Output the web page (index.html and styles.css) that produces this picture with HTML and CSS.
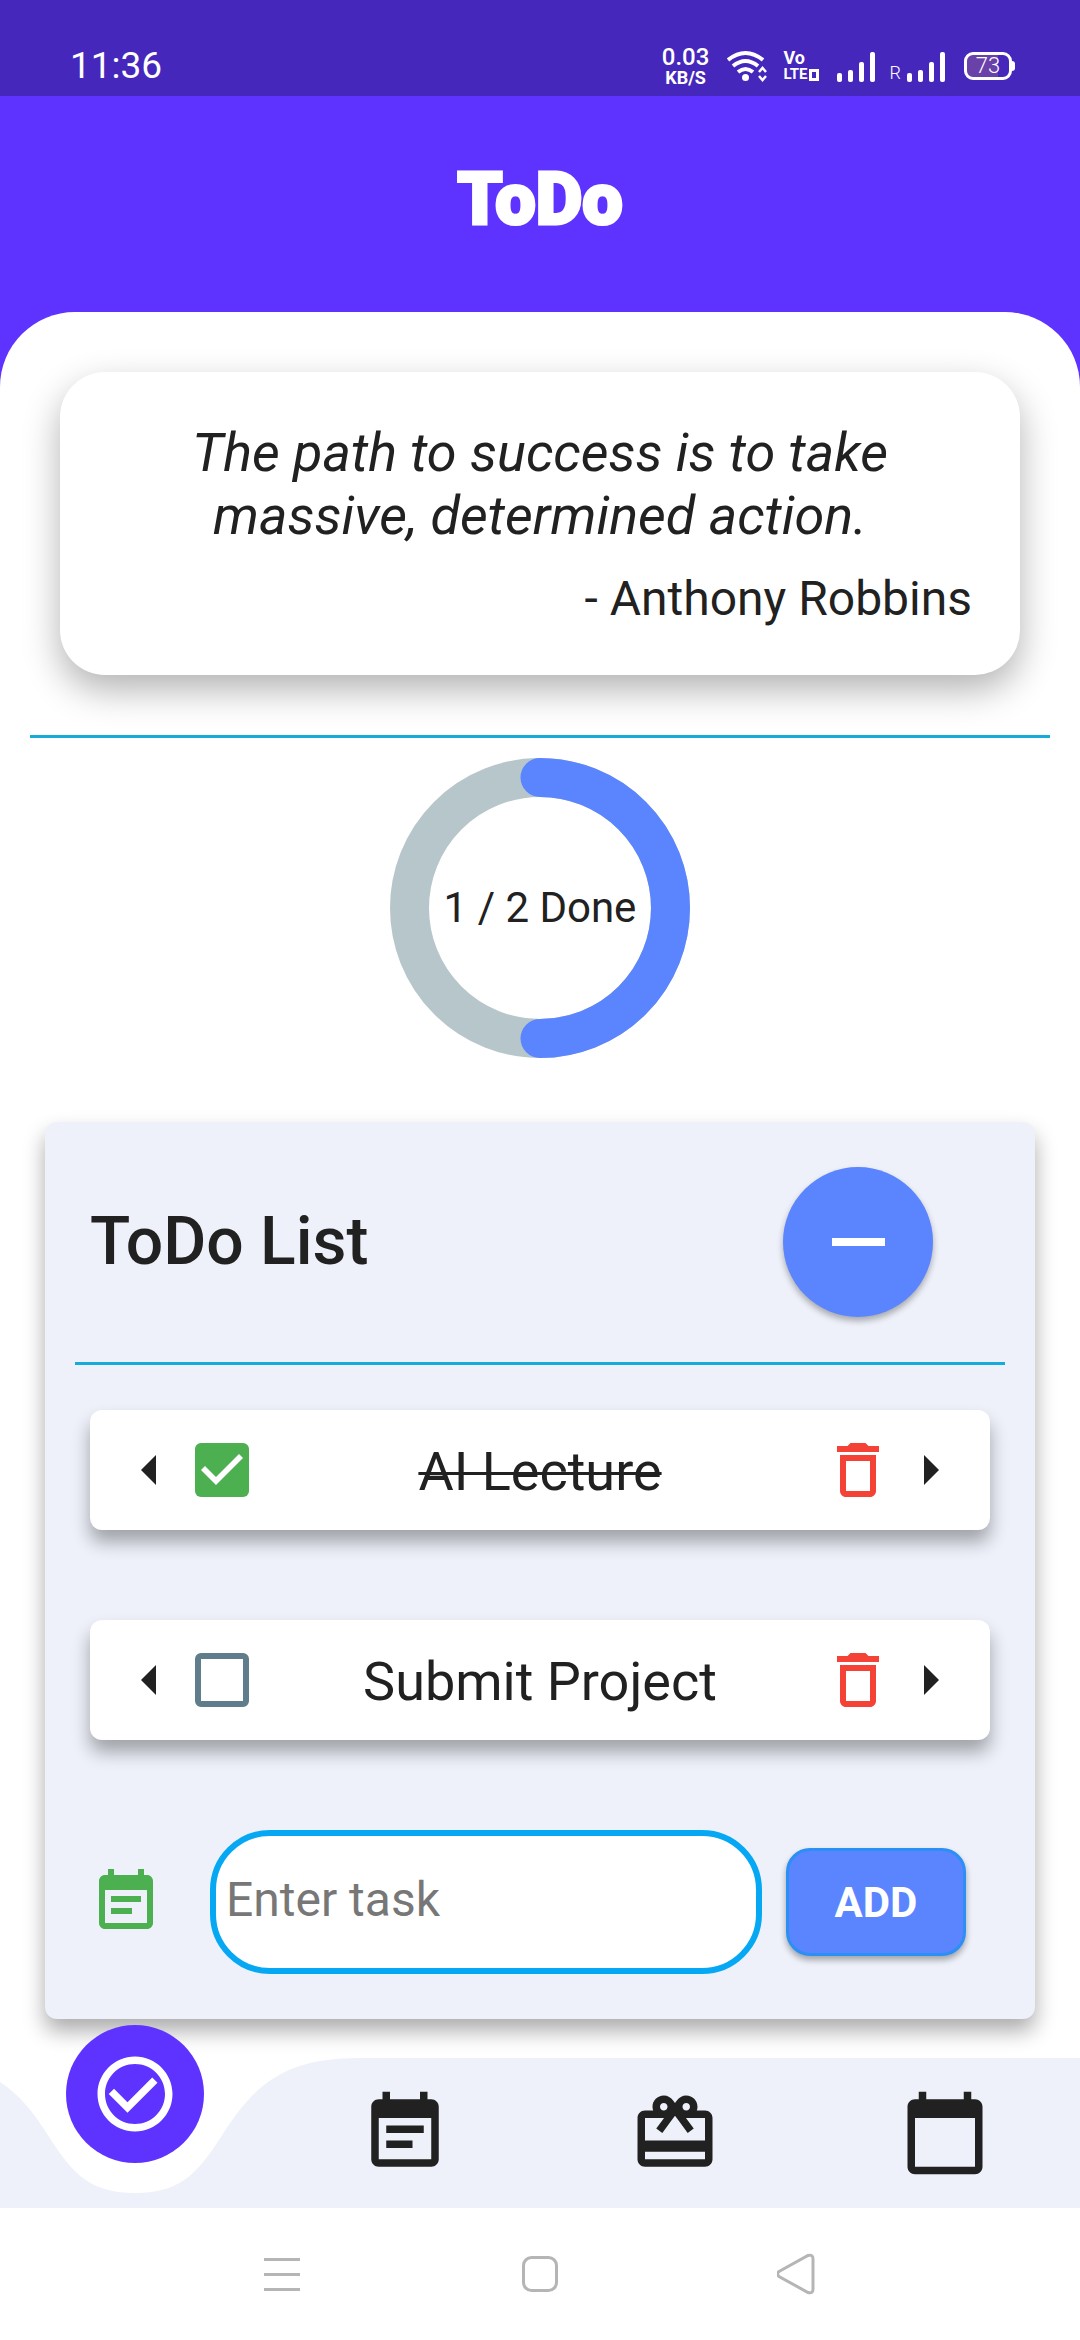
FILE: index.html
```html
<!DOCTYPE html>
<html lang="en">
<head>
<meta charset="utf-8">
<meta name="viewport" content="width=device-width, initial-scale=1">
<title>ToDo</title>
<link rel="stylesheet" href="styles.css">
</head>
<body>
<svg class="sprite" aria-hidden="true">
  <symbol id="i-left" viewBox="0 0 24 24"><path d="M14 7l-5 5 5 5V7z"/></symbol>
  <symbol id="i-right" viewBox="0 0 24 24"><path d="M10 17l5-5-5-5v10z"/></symbol>
  <symbol id="i-trash" viewBox="0 0 24 24"><path d="M6 19c0 1.1.9 2 2 2h8c1.1 0 2-.9 2-2V7H6v12zM8 9h8v10H8V9zm7.5-5l-1-1h-5l-1 1H5v2h14V4z"/></symbol>
  <symbol id="i-note" viewBox="0 0 24 24"><path d="M17 10H7v2h10v-2zM19 3h-1V1h-2v2H8V1H6v2H5c-1.110 0-2 .9-2 2v14c0 1.100.89 2 2 2h14c1.100 0 2-.9 2-2V5c0-1.100-.9-2-2-2zM19 19H5V8h14v11zM14 14H7v2h7v-2z"/></symbol>
  <symbol id="i-bars" viewBox="0 0 38 31"><rect y="22" width="5" height="9" rx="2"/><rect x="11" y="19" width="5" height="12" rx="2"/><rect x="22" y="11" width="5" height="20" rx="2"/><rect x="33" y="1" width="5" height="30" rx="2"/></symbol>
</svg>

<header class="top">
  <div class="status">
    <span class="clock">11:36</span>
    <div class="status-right">
      <span class="speed"><b>0.03</b><small>KB/S</small></span>
      <svg class="wifi" viewBox="0 0 40 32" aria-hidden="true">
        <g fill="none" stroke="#fff" stroke-width="4"><path d="M1 10q17.500-14 35 0"/><path d="M6 16q12.500-10 25 0"/><path d="M11 22q7.500-6 15 0"/></g>
        <circle cx="18.500" cy="27.500" r="3.500" fill="#fff"/>
        <path d="M32 22l3.500-4 3.500 4M32 26l3.500 4 3.500-4" fill="none" stroke="#fff" stroke-width="2.500"/>
      </svg>
      <span class="volte"><span>Vo</span><span class="lte">LTE<i></i></span></span>
      <svg class="bars"><use href="#i-bars"/></svg>
      <span class="roam">R</span>
      <svg class="bars"><use href="#i-bars"/></svg>
      <span class="battery">73</span>
    </div>
  </div>
  <h1 class="brand">ToDo</h1>
</header>

<main class="sheet">
  <blockquote class="quote">
    <p class="quote-text">The path to success is to take massive, determined action.</p>
    <footer class="quote-author">- Anthony Robbins</footer>
  </blockquote>

  <hr class="rule">

  <section class="progress">
    <svg class="ring" viewBox="0 0 300 300" aria-hidden="true">
      <circle cx="150" cy="150" r="130.500" fill="none" stroke="#b7c6cb" stroke-width="39"/>
      <path d="M150 19.500a130.500 130.500 0 0 1 0 261" fill="none" stroke="#5a85ff" stroke-width="39" stroke-linecap="round"/>
    </svg>
    <span class="progress-label">1 / 2 Done</span>
  </section>

  <section class="panel">
    <div class="panel-head">
      <h2>ToDo List</h2>
      <button class="collapse" type="button" aria-label="Collapse"></button>
    </div>
    <hr class="rule">
    <ul class="tasks">
      <li class="task">
        <svg class="icon"><use href="#i-left"/></svg>
        <input class="check" type="checkbox" id="task-1" checked>
        <label class="task-name" for="task-1">AI Lecture</label>
        <button class="delete" type="button" aria-label="Delete"><svg class="icon"><use href="#i-trash"/></svg></button>
        <svg class="icon"><use href="#i-right"/></svg>
      </li>
      <li class="task">
        <svg class="icon"><use href="#i-left"/></svg>
        <input class="check" type="checkbox" id="task-2">
        <label class="task-name" for="task-2">Submit Project</label>
        <button class="delete" type="button" aria-label="Delete"><svg class="icon"><use href="#i-trash"/></svg></button>
        <svg class="icon"><use href="#i-right"/></svg>
      </li>
    </ul>
    <form class="add">
      <label class="add-icon" for="new-task" aria-label="New task"><svg class="icon"><use href="#i-note"/></svg></label>
      <input class="add-input" id="new-task" type="text" placeholder="Enter task">
      <button class="add-button" type="button">ADD</button>
    </form>
  </section>
</main>

<nav class="tabs">
  <svg class="notch" viewBox="0 0 360 150" aria-hidden="true"><path d="M0 0H360C290 0 258 22 226 71C200 112 184 135 135 135C86 135 70 112 44 71C30 50 18 36 0 24Z"/></svg>
  <a class="tab active" href="#todo" aria-label="To do"><svg class="tab-icon" viewBox="0 0 24 24"><path d="M16.590 7.580L10 14.170l-3.590-3.580L5 12l5 5 8-8zM12 2C6.480 2 2 6.480 2 12s4.480 10 10 10 10-4.480 10-10S17.520 2 12 2zm0 18c-4.420 0-8-3.580-8-8s3.580-8 8-8 8 3.580 8 8-3.580 8-8 8z"/></svg></a>
  <a class="tab" href="#notes" aria-label="Notes"><svg class="tab-icon"><use href="#i-note"/></svg></a>
  <a class="tab" href="#rewards" aria-label="Rewards"><svg class="tab-icon" viewBox="0 0 24 24"><path d="M20 6h-2.180c.11-.31.18-.65.18-1 0-1.660-1.340-3-3-3-1.050 0-1.960.54-2.500 1.350l-.5.67-.5-.68C10.960 2.540 10.050 2 9 2 7.340 2 6 3.340 6 5c0 .35.07.69.18 1H4c-1.110 0-1.990.89-1.990 2L2 19c0 1.110.89 2 2 2h16c1.110 0 2-.89 2-2V8c0-1.110-.89-2-2-2zm-5-2c.55 0 1 .45 1 1s-.45 1-1 1-1-.45-1-1 .45-1 1-1zM9 4c.55 0 1 .45 1 1s-.45 1-1 1-1-.45-1-1 .45-1 1-1zm11 15H4v-2h16v2zm0-5H4V8h5.080L7 10.830 8.620 12 11 8.760l1-1.360 1 1.360L15.380 12 17 10.830 14.920 8H20v6z"/></svg></a>
  <a class="tab" href="#calendar" aria-label="Calendar"><svg class="tab-icon" viewBox="0 0 24 24"><path d="M20 3h-1V1h-2v2H7V1H5v2H4c-1.100 0-2 .9-2 2v16c0 1.100.9 2 2 2h16c1.100 0 2-.9 2-2V5c0-1.100-.9-2-2-2zm0 18H4V8h16v13z"/></svg></a>
</nav>

<div class="system">
  <button type="button" aria-label="Recent apps"><svg viewBox="0 0 42 42"><path d="M3 6.500H39M3 21.500H39M3 36.500H39"/></svg></button>
  <button type="button" aria-label="Home"><svg viewBox="0 0 42 42"><rect x="4.500" y="4.500" width="33" height="33" rx="8"/></svg></button>
  <button type="button" aria-label="Back"><svg viewBox="0 0 42 42"><path d="M2 18.500L31 2.500Q36 1 36 6V36Q36 41 31 39.500L2 23.500Q-1 21 2 18.500Z"/></svg></button>
</div>
</body>
</html>
```

FILE: styles.css
```css
* {
  box-sizing: border-box;
}

body {
  margin: 0;
  background: #fff;
  color: #212121;
  font-family: Roboto, "Liberation Sans", sans-serif;
}

h1, h2, p, ul, blockquote, hr {
  margin: 0;
  padding: 0;
}

button {
  padding: 0;
  border: 0;
  background: none;
  font-family: inherit;
}

svg {
  display: block;
}

.sprite {
  display: none;
}

/* Header */
.top {
  padding-bottom: 75px;
  background: #5f33ff;
  color: #fff;
}

.status {
  display: flex;
  justify-content: space-between;
  align-items: center;
  height: 96px;
  padding: 36px 68px 0 70px;
  background: #4527bb;
}

.clock {
  font-size: 37px;
  line-height: 48px;
}

.status-right {
  display: flex;
  align-items: center;
}

.speed {
  display: flex;
  flex-direction: column;
  align-items: center;
  margin-right: 18px;
}

.speed b {
  font-size: 24px;
  font-weight: 500;
  line-height: 24px;
}

.speed small {
  font-size: 18px;
  font-weight: 700;
  line-height: 18px;
}

.wifi {
  width: 40px;
  height: 32px;
  margin-right: 16px;
}

.volte {
  display: flex;
  flex-direction: column;
  margin-right: 18px;
  font-size: 18px;
  font-weight: 700;
  line-height: 17px;
}

.lte {
  display: flex;
  align-items: center;
  font-size: 15px;
}

.lte i {
  width: 10px;
  height: 12px;
  margin-left: 1px;
  border: 3px solid #fff;
}

.bars {
  width: 38px;
  height: 31px;
  fill: #fff;
}

.roam {
  margin: 14px 6px 0 15px;
  font-size: 18px;
  font-weight: 300;
  line-height: 18px;
}

.battery {
  position: relative;
  width: 48px;
  margin-left: 19px;
  border: 3px solid #fff;
  border-radius: 9px;
  background: linear-gradient(90deg, #6941a8 73%, #4527bb 73%);
  font-size: 22px;
  font-weight: 300;
  line-height: 22px;
  text-align: center;
}

.battery::after {
  content: "";
  position: absolute;
  top: 6px;
  right: -6px;
  width: 3px;
  height: 10px;
  border-radius: 0 3px 3px 0;
  background: #fff;
}

.brand {
  padding: 56px 0 64px;
  font-size: 72px;
  font-weight: 900;
  line-height: 96px;
  text-align: center;
  -webkit-text-stroke: 3px #fff;
}

/* Content sheet */
.sheet {
  margin-top: -75px;
  padding: 60px 0 39px;
  border-radius: 75px 75px 0 0;
  background: #fff;
}

.quote {
  margin: 0 60px 60px;
  padding: 49px 48px 48px;
  border-radius: 45px;
  background: #fff;
  box-shadow: 0 15px 36px rgba(0, 0, 0, .3);
}

.quote-text {
  margin-bottom: 24px;
  font-size: 54px;
  font-style: italic;
  line-height: 63px;
  text-align: center;
  text-wrap: balance;
}

.quote-author {
  font-size: 48px;
  line-height: 56px;
  text-align: right;
}

.rule {
  height: 3px;
  margin: 0 30px;
  border: 0;
  background: #17abd9;
}

.progress {
  display: grid;
  place-items: center;
  padding: 20px 0 64px;
}

.ring,
.progress-label {
  grid-area: 1 / 1;
}

.ring {
  width: 300px;
  height: 300px;
}

.progress-label {
  font-size: 42px;
  line-height: 48px;
}

/* Task panel */
.panel {
  margin: 0 45px;
  border-radius: 12px;
  background: #eef1fa;
  box-shadow: 0 12px 21px rgba(0, 0, 0, .33);
}

.panel-head {
  display: flex;
  justify-content: space-between;
  align-items: center;
  padding: 45px 102px 45px 45px;
}

.panel-head h2 {
  font-size: 66px;
  font-weight: 500;
  line-height: 78px;
}

.collapse {
  display: grid;
  place-items: center;
  width: 150px;
  height: 150px;
  border-radius: 50%;
  background: #5a85ff;
  box-shadow: 0 4px 6px rgba(0, 0, 0, .3);
}

.collapse::before {
  content: "";
  width: 53px;
  height: 8px;
  background: #fff;
}

.tasks {
  display: grid;
  gap: 90px;
  padding: 45px;
  list-style: none;
}

.task {
  display: flex;
  align-items: center;
  padding: 24px;
  border-radius: 12px;
  background: #fff;
  box-shadow: 0 12px 18px rgba(0, 0, 0, .33);
}

.icon {
  width: 72px;
  height: 72px;
  fill: currentColor;
}

.check {
  appearance: none;
  width: 54px;
  height: 54px;
  margin: 9px;
  border: 6px solid #607d8b;
  border-radius: 6px;
}

.check:checked {
  border: 0;
  background: #4caf50;
}

.check:checked::after {
  content: "";
  display: block;
  width: 54px;
  height: 54px;
  background: #fff;
  clip-path: polygon(21px 42px, 6px 27px, 10px 23px, 21px 34px, 44px 11px, 48px 15px);
}

.task-name {
  flex: 1;
  padding-top: 3px;
  font-size: 54px;
  line-height: 66px;
  text-align: center;
}

.check:checked + .task-name {
  text-decoration: line-through;
  text-decoration-thickness: 3px;
}

.delete {
  color: #f44336;
}

.add {
  display: flex;
  align-items: center;
  padding: 45px 69px 45px 45px;
}

.add-icon {
  margin-right: 48px;
  color: #4caf50;
}

.add-input {
  flex: 1;
  min-width: 0;
  height: 144px;
  margin-right: 24px;
  padding: 0 12px 6px 10px;
  border: 6px solid #06a8f3;
  border-radius: 60px;
  background: #fff;
  color: inherit;
  font-family: inherit;
  font-size: 48px;
}

.add-input::placeholder {
  color: #777;
}

.add-button {
  width: 180px;
  height: 108px;
  border: 3px solid #2b8ff5;
  border-radius: 24px;
  background: #5a85ff;
  box-shadow: 0 4px 6px rgba(0, 0, 0, .33);
  color: #fff;
  font-size: 42px;
  font-weight: 700;
}

/* Bottom tabs */
.tabs {
  position: relative;
  display: grid;
  grid-template-columns: repeat(4, 1fr);
  height: 150px;
  background: #eef1fa;
}

.notch {
  position: absolute;
  top: 0;
  left: 0;
  width: 360px;
  height: 150px;
  fill: #fff;
}

.tab {
  display: grid;
  place-items: center;
  color: #212121;
}

.tab.active {
  z-index: 1;
  place-self: start center;
  width: 138px;
  height: 138px;
  margin-top: -33px;
  border-radius: 50%;
  background: #5f33ff;
  color: #fff;
}

.tab-icon {
  width: 90px;
  height: 90px;
  fill: currentColor;
}

/* System navigation */
.system {
  display: grid;
  grid-template-columns: repeat(3, 1fr);
  place-items: center;
  height: 132px;
  padding: 0 153px;
}

.system svg {
  width: 42px;
  height: 42px;
  fill: none;
  stroke: #b5b5b5;
  stroke-width: 3;
}
```
